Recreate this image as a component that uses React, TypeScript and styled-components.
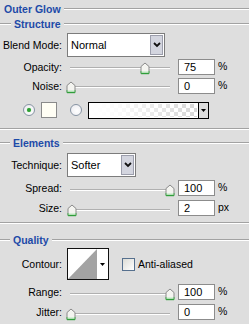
import React from "react";
import styled, { createGlobalStyle } from "styled-components";

const Global = createGlobalStyle`
  html, body { margin: 0; padding: 0; background: #dedede; }
  body { font-family: "Liberation Sans", Arial, sans-serif; font-size: 10.5px; color: #000; }
`;

const Panel = styled.div`
  width: 249px;
  height: 324px;
  overflow: hidden;
  background: #dedede;
  display: flex;
  flex-direction: column;
`;

const Line = styled.div<{ $w?: number }>`
  flex: ${(p) => (p.$w ? `0 0 ${p.$w}px` : "1")};
  height: 0;
  border-top: 1px solid #a2a2a2;
  border-bottom: 1px solid #ffffff;
`;

const Header = styled.div<{ $h: number; $mt?: number }>`
  display: flex;
  align-items: center;
  height: ${(p) => p.$h}px;
  margin-top: ${(p) => p.$mt ?? 0}px;
  flex: none;
`;

const HeaderText = styled.span<{ $pl?: number }>`
  color: #1d4aa8;
  font-weight: bold;
  font-size: 10.5px;
  padding: 0 3px 0 ${(p) => p.$pl ?? 3}px;
  white-space: nowrap;
`;

const Rule = styled.div<{ $mt: number }>`
  flex: none;
  margin-top: ${(p) => p.$mt}px;
  height: 0;
  border-top: 1px solid #a2a2a2;
  border-bottom: 1px solid #ffffff;
`;

const Row = styled.div<{ $h: number; $mt?: number }>`
  display: flex;
  align-items: center;
  flex: none;
  height: ${(p) => p.$h}px;
  margin-top: ${(p) => p.$mt ?? 0}px;
`;

const Label = styled.div`
  flex: none;
  width: 62px;
  margin-right: 5px;
  text-align: right;
  white-space: nowrap;
`;

const Select = styled.div<{ $w: number }>`
  display: flex;
  flex: none;
  width: ${(p) => p.$w}px;
  height: 24px;
  box-sizing: border-box;
  border: 1px solid #7c7c7c;
  background: #fff;
`;

const SelectText = styled.span`
  flex: 1;
  display: flex;
  align-items: center;
  padding-left: 3px;
  font-size: 11px;
`;

const SelectButton = styled.div`
  flex: none;
  width: 13px;
  margin: 1px;
  box-sizing: border-box;
  background: #d3d5df;
  border: 1px solid #9c9eac;
  display: flex;
  align-items: center;
  justify-content: center;
`;

const SliderBox = styled.div`
  position: relative;
  flex: none;
  width: 103px;
  height: 19px;
  padding-left: 3px;
  box-sizing: border-box;
  display: flex;
  align-items: flex-start;
`;

const Track = styled.div`
  flex: 1;
  margin-top: 10px;
  height: 0;
  border-top: 1px solid #b0b0b0;
  border-bottom: 1px solid #ffffff;
`;

const Thumb = styled.svg`
  position: absolute;
  top: 5px;
`;

const NumberBox = styled.div`
  flex: none;
  margin-left: 8px;
  width: 37px;
  height: 16px;
  box-sizing: border-box;
  border: 1px solid #8c8c8c;
  background: #fff;
  padding-left: 5px;
  line-height: 14px;
  font-size: 11px;
`;

const Unit = styled.span`
  margin-left: 3px;
  align-self: flex-start;
  margin-top: 3px;
`;

const ColorRow = styled.div`
  display: flex;
  align-items: center;
  flex: none;
  height: 16px;
  margin-top: 7px;
  padding-left: 23px;
`;

const Radio = styled.div<{ $on?: boolean; $ml?: number }>`
  flex: none;
  width: 12px;
  height: 12px;
  box-sizing: border-box;
  margin-left: ${(p) => p.$ml ?? 0}px;
  border-radius: 50%;
  border: 1px solid #8794a3;
  background: radial-gradient(circle at 60% 60%, #ffffff 0%, #e9e9ee 100%);
  display: flex;
  align-items: center;
  justify-content: center;
  &::after {
    content: "";
    display: ${(p) => (p.$on ? "block" : "none")};
    width: 4px;
    height: 4px;
    border-radius: 50%;
    background: #2f9e34;
    box-shadow: 0 0 1px #6bd36b;
  }
`;

const Swatch = styled.div`
  flex: none;
  margin-left: 6px;
  width: 16px;
  height: 16px;
  box-sizing: border-box;
  border: 1px solid #8a8a8a;
  background: #fffef4;
`;

const GradientBox = styled.div`
  flex: none;
  display: flex;
  margin-left: 6px;
  width: 121px;
  height: 17px;
  box-sizing: border-box;
  border: 1px solid #000;
  background: #fff;
`;

const GradientFill = styled.div`
  flex: 1;
  margin: 1px;
  background: linear-gradient(to right, #ffffff 0%, rgba(255, 255, 255, 0.9) 25%, rgba(255, 255, 255, 0) 100%),
    repeating-conic-gradient(#d6d6d6 0 25%, #ffffff 0 50%) 0 0 / 8px 8px;
`;

const DropStrip = styled.div`
  flex: none;
  width: 9px;
  border-left: 1px solid #000;
  background: #dcdcdc;
  display: flex;
  align-items: center;
  justify-content: center;
`;

const ContourBox = styled.div`
  flex: none;
  display: flex;
  width: 42px;
  height: 32px;
  box-sizing: border-box;
  border: 1px solid #111;
  background: #fff;
`;

const ContourStrip = styled.div`
  flex: 1;
  display: flex;
  align-items: center;
  justify-content: center;
`;

const Check = styled.div`
  flex: none;
  margin-left: 13px;
  width: 13px;
  height: 13px;
  box-sizing: border-box;
  border: 1px solid #56708e;
  background: linear-gradient(135deg, #dcdcd6 0%, #ffffff 100%);
`;

const CheckLabel = styled.span`
  margin-left: 3px;
`;

const Chevron = () => (
  <svg width="8" height="6" viewBox="0 0 8 6">
    <polyline points="1,1 4,4 7,1" fill="none" stroke="#111" strokeWidth="1.8" />
  </svg>
);

const Tri = () => (
  <svg width="5" height="3" viewBox="0 0 5 3">
    <polygon points="0,0 5,0 2.5,3" fill="#000" />
  </svg>
);

const ThumbIcon = ({ pct }: { pct: number }) => (
  <Thumb width="10" height="13" viewBox="0 0 10 13" style={{ left: pct * 99 - 1 }}>
    <path d="M1,4.5 L5,1 L9,4.5 L9,11.5 L1,11.5 Z" fill="#f4f4f0" stroke="#8a8a8a" strokeWidth="1" />
    <path d="M1.5,9 L8.5,9 L8.5,11.5 L1.5,11.5 Z" fill="#d8eed8" />
    <path d="M1,11.5 L9,11.5" stroke="#2f9e3a" strokeWidth="1.4" />
    <path d="M1,9 L1,11.5 M9,9 L9,11.5" stroke="#4fae56" strokeWidth="1" />
  </Thumb>
);

const SliderRow = ({
  label,
  pct,
  value,
  unit,
  h = 19,
  mt = 0,
}: {
  label: string;
  pct: number;
  value: string;
  unit: string;
  h?: number;
  mt?: number;
}) => (
  <Row $h={h} $mt={mt}>
    <Label>{label}</Label>
    <SliderBox>
      <Track />
      <ThumbIcon pct={pct} />
    </SliderBox>
    <NumberBox>{value}</NumberBox>
    <Unit>{unit}</Unit>
  </Row>
);

export default function App() {
  return (
    <Panel>
      <Global />
      <Header $h={18}>
        <HeaderText $pl={4}>Outer Glow</HeaderText>
        <Line />
      </Header>
      <Header $h={11}>
        <Line $w={11} />
        <HeaderText>Structure</HeaderText>
        <Line />
      </Header>
      <Row $h={25} $mt={3}>
        <Label>Blend Mode:</Label>
        <Select $w={98}>
          <SelectText>Normal</SelectText>
          <SelectButton>
            <Chevron />
          </SelectButton>
        </Select>
      </Row>
      <SliderRow label="Opacity:" pct={0.75} value="75" unit="%" />
      <SliderRow label="Noise:" pct={0} value="0" unit="%" />
      <ColorRow>
        <Radio $on />
        <Swatch />
        <Radio $ml={13} />
        <GradientBox>
          <GradientFill />
          <DropStrip>
            <Tri />
          </DropStrip>
        </GradientBox>
      </ColorRow>
      <Rule $mt={10} />
      <Header $h={12} $mt={7}>
        <Line $w={10} />
        <HeaderText>Elements</HeaderText>
        <Line />
      </Header>
      <Row $h={24} $mt={4}>
        <Label>Technique:</Label>
        <Select $w={69}>
          <SelectText>Softer</SelectText>
          <SelectButton>
            <Chevron />
          </SelectButton>
        </Select>
      </Row>
      <SliderRow label="Spread:" pct={1} value="100" unit="%" h={20} mt={1} />
      <SliderRow label="Size:" pct={0.01} value="2" unit="px" h={20} />
      <Rule $mt={4} />
      <Header $h={12} $mt={10}>
        <Line $w={10} />
        <HeaderText>Quality</HeaderText>
        <Line />
      </Header>
      <Row $h={32} $mt={2}>
        <Label>Contour:</Label>
        <ContourBox>
          <svg width="29" height="30" viewBox="0 0 29 30">
            <polygon points="0,30 29,0 29,30" fill="#a3a3a3" />
          </svg>
          <ContourStrip>
            <Tri />
          </ContourStrip>
        </ContourBox>
        <Check />
        <CheckLabel>Anti-aliased</CheckLabel>
      </Row>
      <SliderRow label="Range:" pct={1} value="100" unit="%" h={20} mt={2} />
      <SliderRow label="Jitter:" pct={0} value="0" unit="%" h={20} />
    </Panel>
  );
}
